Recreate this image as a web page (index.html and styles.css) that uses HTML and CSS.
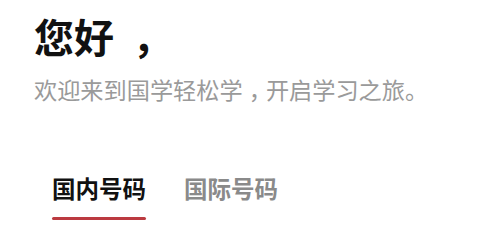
FILE: index.html
```html
<!DOCTYPE html>
<html lang="zh-CN">
<head>
<meta charset="utf-8">
<link rel="stylesheet" href="styles.css">
</head>
<body>
<main class="page">
  <h1 class="title">您好<span class="title-comma">，</span></h1>
  <p class="subtitle">欢迎来到国学轻松学<span class="sub-comma">，</span>开启学习之旅。</p>
  <nav class="tabs">
    <div class="tab active">国内号码</div>
    <div class="tab">国际号码</div>
  </nav>
</main>
</body>
</html>
```
FILE: styles.css
```css
html, body {
  margin: 0;
  padding: 0;
  background: #ffffff;
}
.page {
  padding: 16px 0 0 34px;
  font-family: "Noto Sans CJK SC", "Noto Sans", sans-serif;
}
.title {
  margin: 0;
  font-size: 40px;
  line-height: 1;
  font-weight: 700;
  color: #111111;
}
.title-comma {
  padding-left: 0.46em;
}
.subtitle {
  margin: 22px 0 0 0;
  font-size: 23.2px;
  line-height: 1;
  font-weight: 400;
  color: #9a9a9a;
}
.sub-comma {
  font-feature-settings: "halt" 1;
  padding-left: 0.26em;
  padding-right: 0.24em;
}
.tabs {
  display: flex;
  gap: 38px;
  margin-top: 76px;
  padding-left: 18px;
}
.tab {
  font-size: 23.5px;
  line-height: 1;
  font-weight: 700;
  color: #8a8a8a;
  padding-bottom: 19px;
  position: relative;
}
.tab.active {
  color: #111111;
}
.tab.active::after {
  content: "";
  position: absolute;
  left: 0;
  right: 0;
  bottom: 0;
  height: 3px;
  border-radius: 2px;
  background: #bb3a40;
}
```
